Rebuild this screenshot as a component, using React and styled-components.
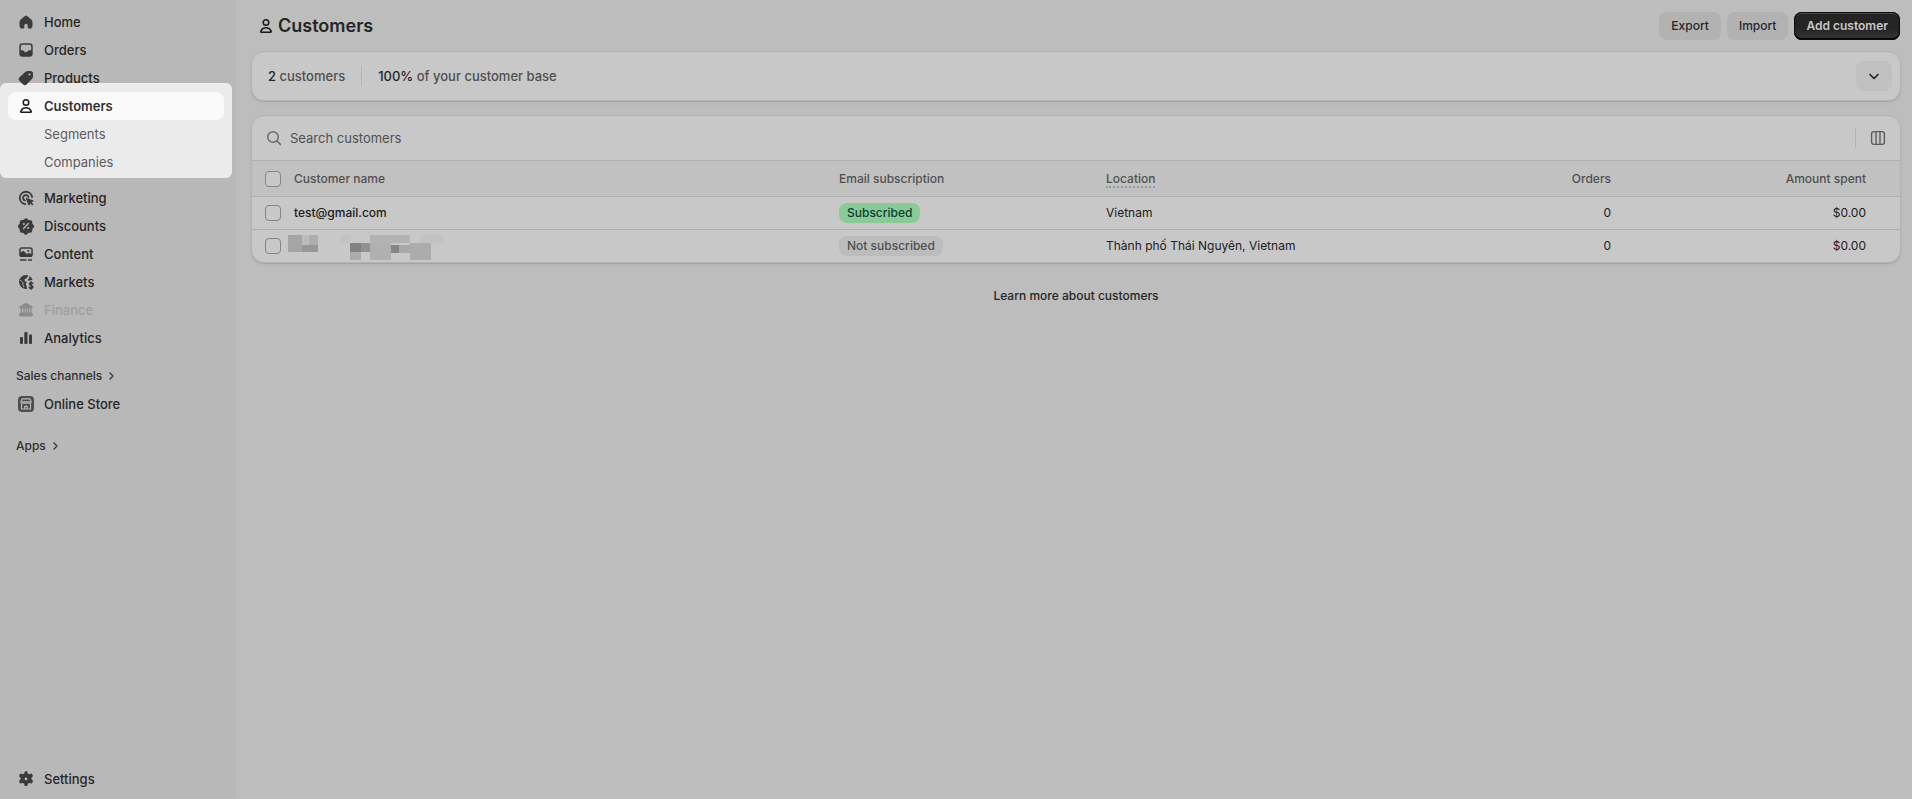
import React from "react";
import styled, { createGlobalStyle, css } from "styled-components";

const Global = createGlobalStyle`
  *, *::before, *::after { box-sizing: border-box; }
  body { margin: 0; background: #bdbdbd; color: #262626; font-family: Inter, "Liberation Sans", sans-serif; font-size: 13px; line-height: 20px; }
  button, input { font: inherit; color: inherit; }
  a { color: inherit; text-decoration: none; }
`;

const Page = styled.div`
  display: flex;
  min-height: 100vh;
`;

const Sidebar = styled.nav`
  flex: 0 0 236px;
  display: flex;
  flex-direction: column;
  padding: 8px 4px 6px 0;
  background: #b8b8b8;
`;

const NavGroup = styled.div`
  display: flex;
  flex-direction: column;
  padding: 0 8px;
`;

const Spotlight = styled(NavGroup)`
  margin: -9px 0 6px;
  padding: 9px 8px 2px;
  border-radius: 6px;
  background: #ebebeb;
`;

const NavItem = styled.a`
  display: flex;
  align-items: center;
  gap: 8px;
  height: 28px;
  padding: 0 8px;
  border-radius: 8px;
  font-weight: 500;
  color: #262626;
  svg { position: relative; z-index: 1; width: 20px; height: 20px; fill: #3b3b3b; }
  ${(p) => p.$active && css`
    background: #fafafa;
    font-weight: 600;
    color: #303030;
    svg { fill: #1a1a1a; }
  `}
  ${(p) => p.$disabled && css`
    color: #9f9f9f;
    svg { fill: #8c8c8c; }
  `}
  ${(p) => p.$sub && css`
    padding-left: 36px;
    font-weight: 400;
    color: #5c5c5c;
  `}
`;

const SectionTitle = styled.button`
  display: flex;
  align-items: center;
  gap: 4px;
  height: 28px;
  margin: ${(p) => p.$top}px 0 0;
  padding: 0 8px;
  border: 0;
  background: none;
  font-size: 12px;
  font-weight: 500;
  color: #303030;
  svg { width: 10px; height: 12px; }
`;

const Spacer = styled.div`
  flex: 1;
`;

const Main = styled.main`
  flex: 1;
  min-width: 0;
  display: flex;
  flex-direction: column;
  gap: 16px;
  padding: 12px 12px 12px 16px;
`;

const PageHeader = styled.header`
  display: flex;
  align-items: center;
  gap: 6px;
  height: 28px;
  margin-bottom: -4px;
  padding-left: 4px;
  svg { width: 20px; height: 20px; fill: #1a1a1a; }
`;

const Title = styled.h1`
  flex: 1;
  display: flex;
  align-items: center;
  gap: 2px;
  margin: 0;
  font-size: 18px;
  line-height: 24px;
  font-weight: 600;
  color: #262626;
`;

const Button = styled.button`
  height: 28px;
  padding: 0 12px;
  border: 0;
  border-radius: 8px;
  background: #b2b2b2;
  font-size: 12px;
  font-weight: 500;
  color: #262626;
  ${(p) => p.$primary && css`
    background: linear-gradient(#242424 60%, #383838);
    box-shadow: inset 0 0 0 1px #0d0d0d, inset 0 2px 0 #4a4a4a, inset 0 -2px 0 #000;
    font-weight: 600;
    color: #c8c8c8;
  `}
`;

const Card = styled.section`
  border-radius: 12px;
  background: #c8c8c8;
  box-shadow: 0 0 0 1px #b3b3b3, 0 1px 0 1px #a5a5a5, 0 3px 4px rgba(0, 0, 0, 0.05);
  overflow: hidden;
`;

const Summary = styled(Card)`
  display: flex;
  align-items: center;
  gap: 16px;
  height: 48px;
  padding: 0 8px 0 16px;
`;

const Stat = styled.div`
  font-weight: 500;
  color: #4f4f4f;
  strong { font-weight: 500; color: #262626; }
`;

const Divider = styled.div`
  width: 1px;
  height: 20px;
  background: #b3b3b3;
`;

const IconButton = styled.button`
  display: grid;
  place-items: center;
  width: ${(p) => (p.$plain ? 20 : 36)}px;
  height: ${(p) => (p.$plain ? 20 : 30)}px;
  padding: 0;
  border: 0;
  border-radius: 8px;
  background: ${(p) => (p.$plain ? "none" : "#c0c0c0")};
  svg { width: 20px; height: 20px; }
`;

const SearchBar = styled.div`
  display: flex;
  align-items: center;
  gap: 12px;
  height: 44px;
  padding: 0 12px;
  svg { flex: none; width: 20px; height: 20px; }
`;

const SearchField = styled.label`
  flex: 1;
  display: flex;
  align-items: center;
  gap: 6px;
`;

const SearchInput = styled.input`
  flex: 1;
  height: 28px;
  padding: 0;
  border: 0;
  outline: 0;
  background: none;
  font-weight: 400;
  &::placeholder { color: #505050; opacity: 1; }
`;

const Table = styled.table`
  width: 100%;
  table-layout: fixed;
  border-collapse: separate;
  border-spacing: 0;
  font-size: 12px;
  line-height: 16px;
`;

const Col = styled.col`
  width: ${(p) => (p.$w ? `${p.$w}px` : "auto")};
`;

const cell = css`
  padding: 0 6px;
  text-align: ${(p) => (p.$end ? "right" : "left")};
  border-top: 1px solid #b0b0b0;
  &:first-child { padding: 0 0 0 13px; }
  &:last-child { padding-right: 34px; }
`;

const Th = styled.th`
  ${cell}
  height: 36px;
  background: #c1c1c1;
  font-weight: 500;
  color: #505050;
`;

const Td = styled.td`
  ${cell}
  height: 33px;
  font-weight: ${(p) => (p.$strong ? 500 : 400)};
  color: #202020;
`;

const Hint = styled.span`
  border-bottom: 2px dotted #999;
`;

const Checkbox = styled.input`
  appearance: none;
  display: block;
  width: 16px;
  height: 16px;
  margin: 0;
  border: 1px solid #858585;
  border-radius: 4px;
  background: #c8c8c8;
`;

const Badge = styled.span`
  display: inline-block;
  height: 20px;
  padding: 0 8px;
  border-radius: 8px;
  line-height: 20px;
  font-weight: 500;
  vertical-align: middle;
  background: ${(p) => (p.$success ? "#8aca98" : "#bcbcbc")};
  color: ${(p) => (p.$success ? "#0a4030" : "#505050")};
`;

const Mosaic = styled.svg`
  display: block;
  width: 156px;
  height: 27px;
  margin-left: -6px;
`;

const Learn = styled.a`
  align-self: center;
  margin-top: 8px;
  font-size: 12px;
  line-height: 20px;
  font-weight: 500;
`;

const Svg = ({ children }) => <svg viewBox="0 0 20 20" aria-hidden="true">{children}</svg>;

const PersonIcon = () => (
  <Svg>
    <path fillRule="evenodd" d="M10 3a3.5 3.5 0 1 0 0 7 3.5 3.5 0 0 0 0-7Zm-2 3.5a2 2 0 1 1 4 0 2 2 0 0 1-4 0Z" />
    <path fillRule="evenodd" d="M15.484 14.227a6.274 6.274 0 0 0-10.968 0l-.437.786a1.338 1.338 0 0 0 1.17 1.987h9.502a1.338 1.338 0 0 0 1.17-1.987l-.437-.786Zm-9.657.728a4.773 4.773 0 0 1 8.346 0l.302.545h-8.95l.302-.545Z" />
  </Svg>
);
const HomeIcon = () => (
  <Svg><path d="M8.9 3.9a1.6 1.6 0 0 1 2.2 0l4.2 3.7c.8.7 1.2 1.7 1.2 2.7v3.4a2.8 2.8 0 0 1-2.8 2.8h-1.2a.8.8 0 0 1-.8-.8v-2.2a1.7 1.7 0 0 0-3.4 0v2.2a.8.8 0 0 1-.8.8H6.3a2.8 2.8 0 0 1-2.8-2.8v-3.4c0-1 .4-2 1.2-2.7z" /></Svg>
);
const OrdersIcon = () => (
  <Svg><path fillRule="evenodd" d="M6.3 3.2h7.4a3 3 0 0 1 3 3v7.6a3 3 0 0 1-3 3H6.3a3 3 0 0 1-3-3V6.2a3 3 0 0 1 3-3Zm.2 1.5c-1 0-1.7.7-1.7 1.7v3.8h1.600c.5 0 1 .2 1.300.6l.6.7c.8.9 2.200.9 3 0l.7-.7c.3-.4.8-.6 1.300-.6h1.900V6.400c0-1-.7-1.700-1.700-1.700Z" /></Svg>
);
const ProductsIcon = () => (
  <Svg><path fillRule="evenodd" d="M11.6 3h2.7A2.7 2.7 0 0 1 17 5.7v2.9c0 .8-.3 1.6-.9 2.2l-5.3 5.5a2.7 2.7 0 0 1-3.9 0l-3.3-3.3a2.7 2.7 0 0 1 0-3.8l5.9-5.4c.6-.5 1.3-.8 2.1-.8Zm1.9 4.6a1.1 1.1 0 1 0 0-2.2 1.1 1.1 0 0 0 0 2.2Z" /></Svg>
);
const MarketingIcon = () => (
  <Svg>
    <g fill="none" stroke="#3b3b3b" strokeWidth="1.8" strokeLinecap="round">
      <path d="M16.1 9a6.2 6.2 0 1 0-6.8 7.1" />
      <path d="M12.5 9a2.8 2.8 0 1 0-3.6 3.5" />
    </g>
    <path d="M10.6 9.9 17 12.2c.7.2.7 1.1.1 1.4l-1.5.7 1.8 1.9-1.1 1.2-1.9-1.9-.7 1.6c-.3.7-1.2.6-1.4 0l-2.4-6.5c-.1-.5.3-.9.8-.7Z" />
  </Svg>
);
const DiscountsIcon = () => (
  <Svg>
    <path transform="translate(-1 -.6) scale(1.1)" d="M8.6 3.3a1.9 1.9 0 0 1 2.8 0l.8.8c.2.2.4.2.6.2l1-.1c1 0 1.9.9 1.9 1.9v1c0 .3.1.5.3.7l.7.8a1.9 1.9 0 0 1 0 2.8l-.7.8c-.2.2-.3.4-.3.7v1c0 1-.9 1.9-1.9 1.9h-1c-.3 0-.5.1-.7.3l-.8.7a1.9 1.9 0 0 1-2.8 0l-.8-.7c-.2-.2-.4-.3-.7-.3H6.2c-1 0-1.9-.9-1.9-1.9v-1c0-.3-.1-.5-.3-.7l-.7-.8a1.9 1.9 0 0 1 0-2.8l.7-.8c.2-.2.3-.4.3-.7v-1c0-1 .9-1.9 1.9-1.9h1c.3 0 .5-.1.7-.3Z" />
    <path d="m7.6 12.4 4.8-4.8" stroke="#b8b8b8" strokeWidth="1.4" strokeLinecap="round" />
    <circle cx="7.9" cy="7.9" r="1" fill="#b8b8b8" /><circle cx="12.1" cy="12.1" r="1" fill="#b8b8b8" />
  </Svg>
);
const ContentIcon = () => (
  <Svg>
    <path fillRule="evenodd" d="M5.8 3.2h8.4a2.6 2.6 0 0 1 2.6 2.6v4.6a2.6 2.6 0 0 1-2.6 2.6H5.8a2.6 2.6 0 0 1-2.6-2.6V5.8a2.6 2.6 0 0 1 2.6-2.6Zm0 1.5c-.6 0-1.1.5-1.1 1.1v2.8l1.5-1.2c.6-.5 1.5-.4 2 .1l2 2c.4.4.9.4 1.3.1.9-.6 2.1-.6 3 0l.8.5V5.8c0-.6-.5-1.1-1.1-1.1Z" />
    <circle cx="12.3" cy="6.9" r="1" />
    <path d="M4 15.2h6.5v1.5H4ZM12 15.2h4v1.5h-4Z" />
  </Svg>
);
const MarketsIcon = () => (
  <Svg>
    <path d="M10 3a7 7 0 1 0 1.2 13.9c-.6-.8-.8-1.9-.3-2.8-1.4-.8-1.5-2.9 0-3.9-.7-.7-2.4-.5-2.4-2.2 0-1.2 1.4-1.5 2.3-2.1.8-.5.4-1.7 1.7-2.5A7 7 0 0 0 10 3Z" />
    <path d="M13.5 3.9a7 7 0 0 1 3.1 4l-2.2.3c-.8.1-1.2 1-2.2.4-.9-.6-.1-1.5.6-1.9.9-.6 0-1.6.7-2.8Z" />
    <path d="M4.2 8.3c1.5 1 3.1 2 2.8 3.6-.2 1.2.7 1.6.8 3.3" fill="none" stroke="#b8b8b8" strokeWidth="1" />
    <path d="M16.8 11.3c-.6-.8-3.4-.8-3.4.8 0 1.8 3.5.8 3.5 2.8 0 1.7-3.1 1.7-3.7.5M15.1 9.8v7.4" fill="none" stroke="#3b3b3b" strokeWidth="1.5" strokeLinecap="round" />
  </Svg>
);
const FinanceIcon = () => (
  <Svg><path d="M9.2 3.3a1.8 1.8 0 0 1 1.6 0l5.2 2.6c1.3.7.9 2.6-.6 2.7v3.9c.9.1 1.4.8 1.4 1.6v1.2c0 .7-.5 1.2-1.2 1.2H4.4c-.7 0-1.2-.5-1.2-1.2v-1.2c0-.8.5-1.5 1.4-1.6V8.6C3.1 8.5 2.7 6.6 4 5.9Zm-3.1 5.3v3.9h1.2V8.6Zm2.7 0v3.9h.8V8.6Zm2 0v3.9h.8V8.6Zm2.2 0v3.9h1.1V8.6Z" fillRule="evenodd" /></Svg>
);
const AnalyticsIcon = () => (
  <Svg>
    <rect x="4" y="9" width="3" height="7" rx="1" /><rect x="8.3" y="4" width="3.2" height="12" rx="1" /><rect x="13" y="6.5" width="3" height="9.5" rx="1" />
  </Svg>
);
const StoreIcon = () => (
  <Svg>
    <rect x="2" y="2" width="16" height="16" rx="4" fill="#4d4d4d" />
    <g fill="none" stroke="#b8b8b8" strokeWidth="1.2" strokeLinejoin="round">
      <path d="M6 4.9h8l1.1 3H4.9ZM5.500 10v5h9v-5M8.700 15v-2.600h2.600V15" />
      <path d="M4.900 8c0 2 3.200 2 3.300 0 .1 2 3.500 2 3.600 0 .1 2 3.200 2 3.300 0" />
    </g>
  </Svg>
);
const SettingsIcon = () => (
  <Svg>
    <path transform="translate(-1.5 -1.3) scale(1.15)" fillRule="evenodd" d="M8.7 3.9A1.1 1.1 0 0 1 9.7 3h.6c.5 0 .9.4 1 .9l.2 1.1 1.3.7 1.2-.5c.5-.2 1 0 1.3.4l.5.9c.3.5.2 1.1-.2 1.4l-.9.8v1.4l1 .9c.3.3.4.9.1 1.3l-.5.9c-.3.5-.8.6-1.3.4l-1.2-.4-1.2.7-.3 1.3c-.1.5-.5.8-1 .8h-.6c-.5 0-.9-.3-1-.8l-.3-1.3-1.2-.7-1.2.4c-.5.2-1 .1-1.3-.4l-.5-.9c-.3-.4-.2-1 .2-1.300l.9-.9V8.700l-.9-.8c-.4-.3-.5-.9-.2-1.400l.5-.9c.3-.4.8-.6 1.300-.4l1.200.5L8.500 5ZM10 11a1.200 1.200 0 1 0 0-2.400 1.200 1.200 0 0 0 0 2.400Z" />
  </Svg>
);
const Chevron = () => (
  <svg viewBox="0 0 10 12" fill="none" stroke="#3b3b3b" strokeWidth="1.4" strokeLinecap="round" strokeLinejoin="round" aria-hidden="true"><path d="m4 3 3 3-3 3" /></svg>
);
const ChevronDown = () => (
  <svg viewBox="0 0 20 20" fill="none" stroke="#262626" strokeWidth="1.7" strokeLinecap="round" strokeLinejoin="round" aria-hidden="true"><path d="m6 8.500 4 4 4-4" /></svg>
);
const SearchIcon = () => (
  <svg viewBox="0 0 20 20" fill="none" stroke="#6b6b6b" strokeWidth="1.5" strokeLinecap="round" aria-hidden="true"><circle cx="9" cy="9" r="5.3" /><path d="m13 13 3.4 3.4" /></svg>
);
const ColumnsIcon = () => (
  <svg viewBox="0 0 20 20" fill="none" stroke="#5c5c5c" strokeWidth="1.4" aria-hidden="true"><rect x="3.6" y="3.6" width="12.8" height="12.8" rx="2.3" /><path d="M8 3.6v12.8M12 3.6v12.8" /></svg>
);

const before = [["Home", HomeIcon], ["Orders", OrdersIcon], ["Products", ProductsIcon]];
const after = [
  ["Marketing", MarketingIcon], ["Discounts", DiscountsIcon], ["Content", ContentIcon],
  ["Markets", MarketsIcon], ["Finance", FinanceIcon, true], ["Analytics", AnalyticsIcon],
];

const tiles = [
  [0, 2, 14, 17, "#a5a5a5"], [14, 2, 7, 10, "#bcbcbc"], [21, 2, 9, 10, "#adadad"], [14, 12, 16, 7, "#979797"],
  [53, 2, 9, 8, "#c2c2c2"], [82, 2, 8, 25, "#b2b2b2"], [90, 2, 32, 8, "#b3b3b3"], [132, 2, 23, 8, "#c2c2c2"],
  [62, 10, 11, 9, "#828282"], [73, 10, 9, 9, "#919191"], [62, 19, 11, 8, "#ababab"],
  [82, 10, 21, 17, "#b0b0b0"], [103, 12, 8, 8, "#868686"], [111, 12, 11, 8, "#a9a9a9"], [122, 10, 21, 17, "#acacac"],
];

const NavLinks = ({ items }) => items.map(([label, Icon, disabled]) => (
  <NavItem key={label} href="#" $disabled={disabled}><Icon />{label}</NavItem>
));

export default function App() {
  return (
    <Page>
      <Global />
      <Sidebar aria-label="Main">
        <NavGroup><NavLinks items={before} /></NavGroup>
        <Spotlight>
          <NavItem href="#" $active><PersonIcon />Customers</NavItem>
          <NavItem href="#" $sub>Segments</NavItem>
          <NavItem href="#" $sub>Companies</NavItem>
        </Spotlight>
        <NavGroup>
          <NavLinks items={after} />
          <SectionTitle $top={10}>Sales channels<Chevron /></SectionTitle>
          <NavItem href="#"><StoreIcon />Online Store</NavItem>
          <SectionTitle $top={14}>Apps<Chevron /></SectionTitle>
        </NavGroup>
        <Spacer />
        <NavGroup><NavItem href="#"><SettingsIcon />Settings</NavItem></NavGroup>
      </Sidebar>
      <Main>
        <PageHeader>
          <Title><PersonIcon />Customers</Title>
          <Button>Export</Button>
          <Button>Import</Button>
          <Button $primary>Add customer</Button>
        </PageHeader>
        <Summary>
          <Stat><strong>2</strong> customers</Stat>
          <Divider />
          <Stat><strong>100%</strong> of your customer base</Stat>
          <Spacer />
          <IconButton aria-label="Show details"><ChevronDown /></IconButton>
        </Summary>
        <Card>
          <SearchBar>
            <SearchField>
              <SearchIcon />
              <SearchInput type="text" placeholder="Search customers" aria-label="Search customers" />
            </SearchField>
            <Divider />
            <IconButton $plain aria-label="Edit columns"><ColumnsIcon /></IconButton>
          </SearchBar>
          <Table>
            <colgroup><Col $w={36} /><Col /><Col $w={267} /><Col $w={317} /><Col $w={200} /><Col $w={283} /></colgroup>
            <thead>
              <tr>
                <Th><Checkbox type="checkbox" aria-label="Select all customers" /></Th>
                <Th>Customer name</Th>
                <Th>Email subscription</Th>
                <Th><Hint>Location</Hint></Th>
                <Th $end>Orders</Th>
                <Th $end>Amount spent</Th>
              </tr>
            </thead>
            <tbody>
              <tr>
                <Td><Checkbox type="checkbox" aria-label="Select test@gmail.com" /></Td>
                <Td $strong>test@gmail.com</Td>
                <Td><Badge $success>Subscribed</Badge></Td>
                <Td>Vietnam</Td>
                <Td $end>0</Td>
                <Td $end>$0.00</Td>
              </tr>
              <tr>
                <Td><Checkbox type="checkbox" aria-label="Select customer" /></Td>
                <Td>
                  <Mosaic viewBox="0 0 156 27" role="img" aria-label="Hidden name">
                    {tiles.map(([x, y, w, h, c], i) => <rect key={i} x={x} y={y} width={w} height={h} fill={c} />)}
                  </Mosaic>
                </Td>
                <Td><Badge>Not subscribed</Badge></Td>
                <Td>Thành phố Thái Nguyên, Vietnam</Td>
                <Td $end>0</Td>
                <Td $end>$0.00</Td>
              </tr>
            </tbody>
          </Table>
        </Card>
        <Learn href="#">Learn more about customers</Learn>
      </Main>
    </Page>
  );
}
